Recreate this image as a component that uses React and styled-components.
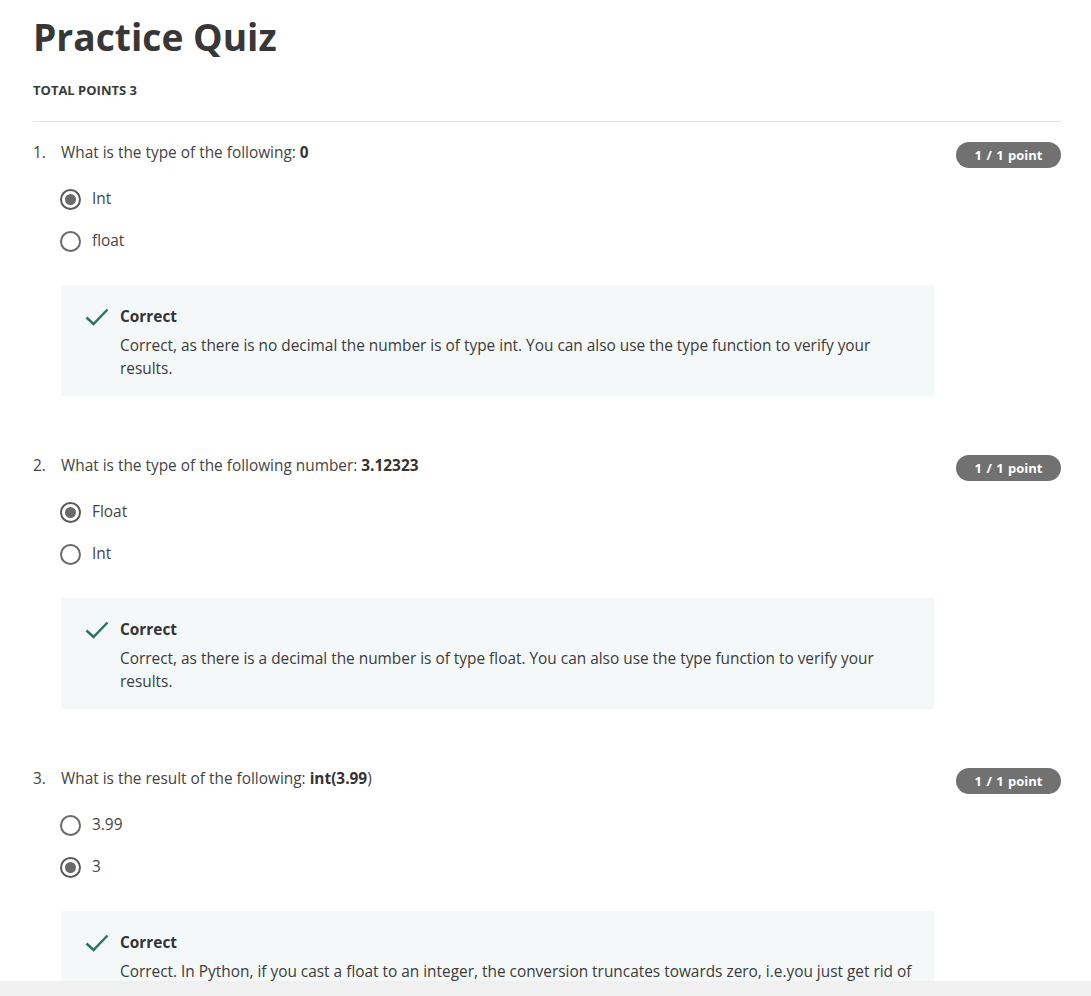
import React from "react";
import styled, { createGlobalStyle } from "styled-components";

const Global = createGlobalStyle`
  html, body { margin: 0; padding: 0; background: #fff; }
  body { font-family: "Open Sans", "Noto Sans", sans-serif; color: #3b3b3b; }
`;

const Page = styled.div`
  padding: 13px 30px 40px 33px;
`;

const Title = styled.h1`
  margin: 0;
  font-size: 37.2px;
  line-height: 48px;
  font-weight: 700;
  color: #373737;
`;

const Total = styled.div`
  margin-top: 21px;
  font-size: 13px;
  line-height: 16px;
  font-weight: 700;
  color: #3b3b3b;
`;

const Divider = styled.hr`
  margin: 23px 0 0;
  border: 0;
  border-top: 1px solid #e1e1e1;
`;

const Question = styled.section`
  padding-top: 20px;
  padding-bottom: 39px;
`;

const Header = styled.div`
  display: flex;
  align-items: flex-start;
`;

const Num = styled.div`
  width: 28px;
  flex: none;
  font-size: 15.4px;
  line-height: 22px;
  color: #444;
`;

const Prompt = styled.div`
  flex: 1;
  font-size: 15.4px;
  line-height: 22px;
  color: #444;
  b { font-weight: 700; color: #333; }
`;

const Badge = styled.div`
  flex: none;
  width: 105px;
  height: 26px;
  border-radius: 13px;
  background: #717171;
  color: #fff;
  font-size: 13px;
  font-weight: 700;
  word-spacing: 1px;
  display: flex;
  align-items: center;
  justify-content: center;
`;

const Options = styled.div`
  margin-top: 20px;
  padding-left: 27px;
  display: flex;
  flex-direction: column;
  gap: 20px;
`;

const Option = styled.label`
  display: flex;
  align-items: center;
  gap: 11px;
  font-size: 15.4px;
  line-height: 22px;
  color: #444;
`;

const Radio = styled.span`
  width: 21px;
  height: 21px;
  box-sizing: border-box;
  border-radius: 50%;
  border: 2px solid ${(p) => (p.$checked ? "#5a5a5a" : "#6a6a6a")};
  display: flex;
  align-items: center;
  justify-content: center;
  &::after {
    content: "";
    width: 11px;
    height: 11px;
    border-radius: 50%;
    background: ${(p) => (p.$checked ? "#6a6a6a" : "transparent")};
  }
`;

const Feedback = styled.div`
  margin: 33px 127px 0 28px;
  background: #f5f8f8;
  padding: 20px 16px 16px 24px;
  display: flex;
  gap: 11px;
`;

const Check = styled.svg`
  flex: none;
  width: 24px;
  height: 20px;
  margin-top: 2px;
`;

const FbBody = styled.div`
  flex: 1;
  font-size: 15.4px;
  line-height: 23px;
  color: #3b3b3b;
`;

const FbTitle = styled.div`
  font-weight: 700;
  color: #333;
  margin-bottom: 6px;
`;

const ScrollBar = styled.div`
  position: fixed;
  left: 0;
  right: 0;
  bottom: 0;
  height: 15px;
  background: #f0f0f0;
`;

const questions = [
  {
    n: 1,
    prompt: (
      <>
        What is the type of the following: <b>0</b>
      </>
    ),
    options: [
      { label: "Int", checked: true },
      { label: "float", checked: false },
    ],
    feedback:
      "Correct, as there is no decimal the number is of type int. You can also use the type function to verify your results.",
  },
  {
    n: 2,
    prompt: (
      <>
        What is the type of the following number: <b>3.12323</b>
      </>
    ),
    options: [
      { label: "Float", checked: true },
      { label: "Int", checked: false },
    ],
    feedback:
      "Correct, as there is a decimal the number is of type float. You can also use the type function to verify your results.",
  },
  {
    n: 3,
    prompt: (
      <>
        What is the result of the following: <b>int(3.99</b>)
      </>
    ),
    options: [
      { label: "3.99", checked: false },
      { label: "3", checked: true },
    ],
    feedback:
      "Correct. In Python, if you cast a float to an integer, the conversion truncates towards zero, i.e.you just get rid of the numbers after the decimal point.",
  },
];

export default function App() {
  return (
    <>
      <Global />
      <Page>
        <Title>Practice Quiz</Title>
        <Total>TOTAL POINTS 3</Total>
        <Divider />
        {questions.map((q) => (
          <Question key={q.n}>
            <Header>
              <Num>{q.n}.</Num>
              <Prompt>{q.prompt}</Prompt>
              <Badge>1 / 1 point</Badge>
            </Header>
            <Options>
              {q.options.map((o) => (
                <Option key={o.label}>
                  <Radio $checked={o.checked} />
                  {o.label}
                </Option>
              ))}
            </Options>
            <Feedback>
              <Check viewBox="0 0 24 20">
                <path
                  d="M1.5 10.5 L8.5 17 L22.5 2.5"
                  fill="none"
                  stroke="#2b7359"
                  strokeWidth="2.4"
                />
              </Check>
              <FbBody>
                <FbTitle>Correct</FbTitle>
                {q.feedback}
              </FbBody>
            </Feedback>
          </Question>
        ))}
      </Page>
      <ScrollBar />
    </>
  );
}
